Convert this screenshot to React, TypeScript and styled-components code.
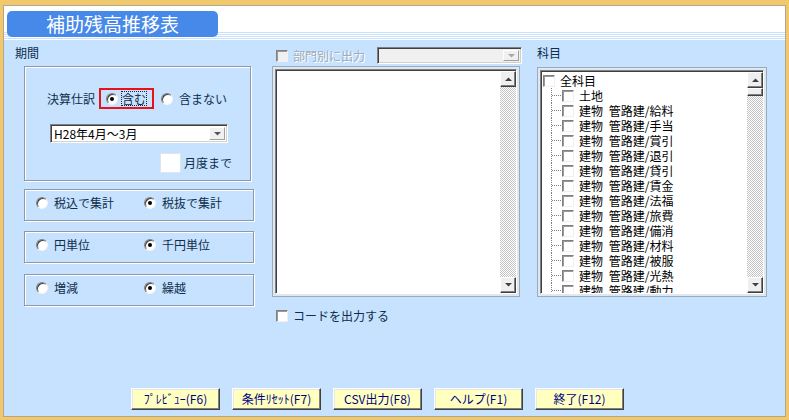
import React from 'react';
import styled, { createGlobalStyle } from 'styled-components';

const FONT = `"Noto Sans CJK JP", "Noto Sans", sans-serif`;
const NAVY = '#0F2D4C';

const GlobalStyle = createGlobalStyle`
  html, body { margin: 0; padding: 0; overflow: hidden; }
  body { font-family: ${FONT}; font-size: 12px; line-height: 14px; }
  * { box-sizing: border-box; }
`;

const Window = styled.div`
  width: 789px;
  height: 420px;
  background: #f1c86b;
  padding: 5px 3px 3px 3px;
  display: flex;
`;

const Inner = styled.div`
  flex: 1;
  min-width: 0;
  border: 1px solid #b3a68c;
  display: flex;
  flex-direction: column;
  background: #c6e2fe;
`;

const Header = styled.div`
  height: 34px;
  flex: none;
  background: linear-gradient(
    to bottom,
    #fff 0 26px,
    #c6e2fe 26px 27px,
    #fff 27px 28px,
    #c6e2fe 28px 29px,
    #fff 29px 30px,
    #c6e2fe 30px 31px,
    #fff 31px 32px,
    #c6e2fe 32px 33px,
    #fff 33px 34px
  );
  padding: 5px 0 0 3px;
`;

const TitlePill = styled.div`
  width: 211px;
  height: 26px;
  background: #4689e8;
  border-radius: 5px;
  color: #fff;
  font-size: 19px;
  line-height: 26px;
  text-align: center;
`;

const Body = styled.div`
  flex: 1;
  display: flex;
  flex-direction: column;
`;

const Content = styled.div`
  flex: 1;
  display: flex;
  padding-left: 11px;
`;

const Column = styled.div<{ $w: number; $ml: number; $pt: number }>`
  width: ${(p) => p.$w}px;
  margin-left: ${(p) => p.$ml}px;
  padding-top: ${(p) => p.$pt}px;
  display: flex;
  flex-direction: column;
  flex: none;
`;

const SectionLabel = styled.div`
  color: ${NAVY};
  height: 14px;
`;

const GroupBox = styled.div<{ $w: number; $h: number; $mt: number }>`
  width: ${(p) => p.$w}px;
  height: ${(p) => p.$h}px;
  margin-top: ${(p) => p.$mt}px;
  margin-left: 9px;
  border: 1px solid #8e98a6;
  box-shadow: inset 1px 1px 0 #fff, 1px 1px 0 #fff;
`;

const PeriodBox = styled(GroupBox)`
  display: flex;
  flex-direction: column;
  padding: 21px 0 0 22px;
`;

const Row = styled.div<{ $mt?: number; $ml?: number }>`
  display: flex;
  align-items: center;
  margin-top: ${(p) => p.$mt ?? 0}px;
  margin-left: ${(p) => p.$ml ?? 0}px;
`;

const Text = styled.span<{ $color?: string }>`
  color: ${(p) => p.$color ?? NAVY};
  white-space: pre;
`;

const FocusBox = styled.div`
  display: flex;
  align-items: center;
  gap: 4px;
  width: 55px;
  height: 21px;
  border: 2px solid #e8111a;
  padding-left: 5px;
  margin-left: 4px;
`;

const FocusText = styled.span`
  color: ${NAVY};
  outline: 1px dotted #222;
  outline-offset: 0px;
  line-height: 13px;
`;

const Radio = styled.span<{ $on?: boolean }>`
  width: 12px;
  height: 12px;
  flex: none;
  border-radius: 50%;
  background: #fff;
  border: 1px solid;
  border-color: #808080 #f4f4f4 #f4f4f4 #808080;
  box-shadow: inset 1px 1px 0 #404040;
  position: relative;
  &::after {
    content: '';
    position: absolute;
    left: 3px;
    top: 3px;
    width: 4px;
    height: 4px;
    border-radius: 50%;
    background: ${(p) => (p.$on ? '#000' : 'transparent')};
  }
`;

const RadioItem = styled.label<{ $ml?: number }>`
  display: flex;
  align-items: center;
  gap: 6px;
  margin-left: ${(p) => p.$ml ?? 0}px;
`;

const RadioGrid = styled.div`
  height: 100%;
  display: grid;
  grid-template-columns: 108px auto;
  align-items: center;
  padding: 0 0 4px 11px;
`;

const Combo = styled.div<{ $w: number; $h: number; $disabled?: boolean }>`
  width: ${(p) => p.$w}px;
  height: ${(p) => p.$h}px;
  display: flex;
  align-items: stretch;
  background: ${(p) => (p.$disabled ? '#f0f0f0' : '#fff')};
  border: 1px solid;
  border-color: #808080 #fff #fff #808080;
  box-shadow: inset 1px 1px 0 #404040, inset -1px -1px 0 #d4d0c8;
  padding: 2px;
`;

const ComboText = styled.span`
  flex: 1;
  color: #000;
  line-height: 13px;
  padding-left: 1px;
`;

const ArrowBtn = styled.div`
  width: 16px;
  flex: none;
  background: #f0f0f0;
  border: 1px solid;
  border-color: #fff #a0a0a0 #a0a0a0 #fff;
  display: flex;
  align-items: center;
  justify-content: center;
`;

const TextBox = styled.div`
  width: 21px;
  height: 20px;
  background: #fff;
  border: 1px solid #dde6ee;
  margin-right: 3px;
`;

const Check = styled.span<{ $disabled?: boolean; $size?: number }>`
  width: ${(p) => p.$size ?? 12}px;
  height: ${(p) => p.$size ?? 12}px;
  flex: none;
  background: ${(p) => (p.$disabled ? '#f0f0f0' : '#fff')};
  border: 1px solid;
  border-color: #808080 #f0f0f0 #f0f0f0 #808080;
  box-shadow: inset 1px 1px 0 #9a9a9a;
`;

const CheckRow = styled.div<{ $mt?: number }>`
  display: flex;
  align-items: center;
  gap: 5px;
  padding-left: 4px;
  margin-top: ${(p) => p.$mt ?? 0}px;
`;

const DisabledText = styled.span`
  color: #a3acb6;
  text-shadow: 1px 1px 0 #fff;
`;

const TopRow = styled.div`
  height: 17px;
  display: flex;
  align-items: center;
`;

const RightCombo = styled(Combo)`
  margin-left: auto;
`;

const ListFrame = styled.div<{ $w: number; $h: number; $mt: number }>`
  width: ${(p) => p.$w}px;
  height: ${(p) => p.$h}px;
  margin-top: ${(p) => p.$mt}px;
  border: 1px solid #9daab8;
  background: #dde8f3;
  padding: 2px;
  display: flex;
`;

const ListInner = styled.div`
  flex: 1;
  display: flex;
  min-width: 0;
  border: 1px solid;
  border-color: #808080 #fff #fff #808080;
  box-shadow: inset 1px 1px 0 #404040;
  padding: 1px 0 0 1px;
  background: #fff;
`;

const ListArea = styled.div`
  flex: 1;
  min-width: 0;
  background: #fff;
  overflow: hidden;
  padding-top: 1px;
`;

const ScrollBar = styled.div`
  width: 16px;
  flex: none;
  display: flex;
  flex-direction: column;
  background: repeating-conic-gradient(#c4c4c4 0% 25%, #fff 0% 50%) 0 0 / 2px 2px;
`;

const ScrollBtn = styled.div<{ $h?: number }>`
  width: 16px;
  height: ${(p) => p.$h ?? 16}px;
  flex: none;
  background: #efefef;
  border: 1px solid;
  border-color: #fff #404040 #404040 #fff;
  box-shadow: inset -1px -1px 0 #808080;
  display: flex;
  align-items: center;
  justify-content: center;
`;

const Spacer = styled.div`
  flex: 1;
`;

const TreeRow = styled.div<{ $child?: boolean }>`
  height: 15px;
  line-height: 15px;
  display: flex;
  align-items: center;
  padding-left: ${(p) => (p.$child ? 9 : 1)}px;
  color: #000;
  white-space: pre;
  word-spacing: 3px;
`;

const Connector = styled.span`
  width: 10px;
  height: 15px;
  flex: none;
  border-left: 1px dotted #808080;
  position: relative;
  margin-right: 1px;
  &::after {
    content: '';
    position: absolute;
    left: 0;
    top: 7px;
    width: 9px;
    border-top: 1px dotted #808080;
  }
`;

const TreeLabel = styled.span`
  margin-left: 5px;
`;

const ButtonBar = styled.div`
  display: flex;
  gap: 12px;
  padding: 0 0 6px 127px;
`;

const Button = styled.button`
  width: 89px;
  height: 22px;
  background: #ffffc0;
  border: 1px solid;
  border-color: #fff #404040 #404040 #fff;
  box-shadow: inset -1px -1px 0 #808080, inset 1px 1px 0 #e8e8e8;
  color: #000080;
  font-family: ${FONT};
  font-size: 12px;
  line-height: 14px;
  padding: 0;
  white-space: pre;
`;

const Arrow = ({ up, color = '#404040' }: { up?: boolean; color?: string }) => (
  <svg width="7" height="4" viewBox="0 0 7 4">
    <polygon points={up ? '0,4 3.5,0.5 7,4' : '0,0 7,0 3.5,3.5'} fill={color} />
  </svg>
);

const accounts = [
  '土地',
  '建物 管路建/給料',
  '建物 管路建/手当',
  '建物 管路建/賞引',
  '建物 管路建/退引',
  '建物 管路建/貸引',
  '建物 管路建/賃金',
  '建物 管路建/法福',
  '建物 管路建/旅費',
  '建物 管路建/備消',
  '建物 管路建/材料',
  '建物 管路建/被服',
  '建物 管路建/光熱',
  '建物 管路建/動力',
];

const buttons = ['ﾌﾟﾚﾋﾞｭｰ(F6)', '条件ﾘｾｯﾄ(F7)', 'CSV出力(F8)', 'ヘルプ(F1)', '終了(F12)'];

export default function App() {
  return (
    <>
      <GlobalStyle />
      <Window>
        <Inner>
          <Header>
            <TitlePill>補助残高推移表</TitlePill>
          </Header>
          <Body>
            <Content>
              <Column $w={244} $ml={0} $pt={6}>
                <SectionLabel>期間</SectionLabel>
                <PeriodBox $w={227} $h={115} $mt={6}>
                  <Row>
                    <Text>決算仕訳</Text>
                    <FocusBox>
                      <Radio $on />
                      <FocusText>含む</FocusText>
                    </FocusBox>
                    <RadioItem $ml={7}>
                      <Radio />
                      <Text>含まない</Text>
                    </RadioItem>
                  </Row>
                  <Row $mt={15} $ml={3}>
                    <Combo $w={178} $h={19}>
                      <ComboText>H28年4月～3月</ComboText>
                      <ArrowBtn>
                        <Arrow color="#555" />
                      </ArrowBtn>
                    </Combo>
                  </Row>
                  <Row $mt={10} $ml={113}>
                    <TextBox />
                    <Text>月度まで</Text>
                  </Row>
                </PeriodBox>
                <GroupBox $w={230} $h={32} $mt={8}>
                  <RadioGrid>
                    <RadioItem>
                      <Radio />
                      <Text>税込で集計</Text>
                    </RadioItem>
                    <RadioItem>
                      <Radio $on />
                      <Text>税抜で集計</Text>
                    </RadioItem>
                  </RadioGrid>
                </GroupBox>
                <GroupBox $w={230} $h={32} $mt={10}>
                  <RadioGrid>
                    <RadioItem>
                      <Radio />
                      <Text>円単位</Text>
                    </RadioItem>
                    <RadioItem>
                      <Radio $on />
                      <Text>千円単位</Text>
                    </RadioItem>
                  </RadioGrid>
                </GroupBox>
                <GroupBox $w={230} $h={32} $mt={11}>
                  <RadioGrid>
                    <RadioItem>
                      <Radio />
                      <Text>増減</Text>
                    </RadioItem>
                    <RadioItem>
                      <Radio $on />
                      <Text>繰越</Text>
                    </RadioItem>
                  </RadioGrid>
                </GroupBox>
              </Column>

              <Column $w={250} $ml={13} $pt={7}>
                <TopRow>
                  <CheckRow>
                    <Check $disabled />
                    <DisabledText>部門別に出力</DisabledText>
                  </CheckRow>
                  <RightCombo $w={145} $h={17} $disabled>
                    <ComboText />
                    <ArrowBtn>
                      <Arrow color="#a8a8a8" />
                    </ArrowBtn>
                  </RightCombo>
                </TopRow>
                <ListFrame $w={248} $h={231} $mt={2}>
                  <ListInner>
                    <ListArea />
                    <ScrollBar>
                      <ScrollBtn>
                        <Arrow up />
                      </ScrollBtn>
                      <Spacer />
                      <ScrollBtn>
                        <Arrow />
                      </ScrollBtn>
                    </ScrollBar>
                  </ListInner>
                </ListFrame>
                <CheckRow $mt={12}>
                  <Check />
                  <Text>コードを出力する</Text>
                </CheckRow>
              </Column>

              <Column $w={230} $ml={15} $pt={6}>
                <SectionLabel>科目</SectionLabel>
                <ListFrame $w={230} $h={230} $mt={7}>
                  <ListInner>
                    <ListArea>
                      <TreeRow>
                        <Check />
                        <TreeLabel>全科目</TreeLabel>
                      </TreeRow>
                      {accounts.map((a) => (
                        <TreeRow $child key={a}>
                          <Connector />
                          <Check />
                          <TreeLabel>{a}</TreeLabel>
                        </TreeRow>
                      ))}
                    </ListArea>
                    <ScrollBar>
                      <ScrollBtn>
                        <Arrow up />
                      </ScrollBtn>
                      <ScrollBtn $h={8} />
                      <Spacer />
                      <ScrollBtn>
                        <Arrow />
                      </ScrollBtn>
                    </ScrollBar>
                  </ListInner>
                </ListFrame>
              </Column>
            </Content>
            <ButtonBar>
              {buttons.map((b) => (
                <Button key={b}>{b}</Button>
              ))}
            </ButtonBar>
          </Body>
        </Inner>
      </Window>
    </>
  );
}
